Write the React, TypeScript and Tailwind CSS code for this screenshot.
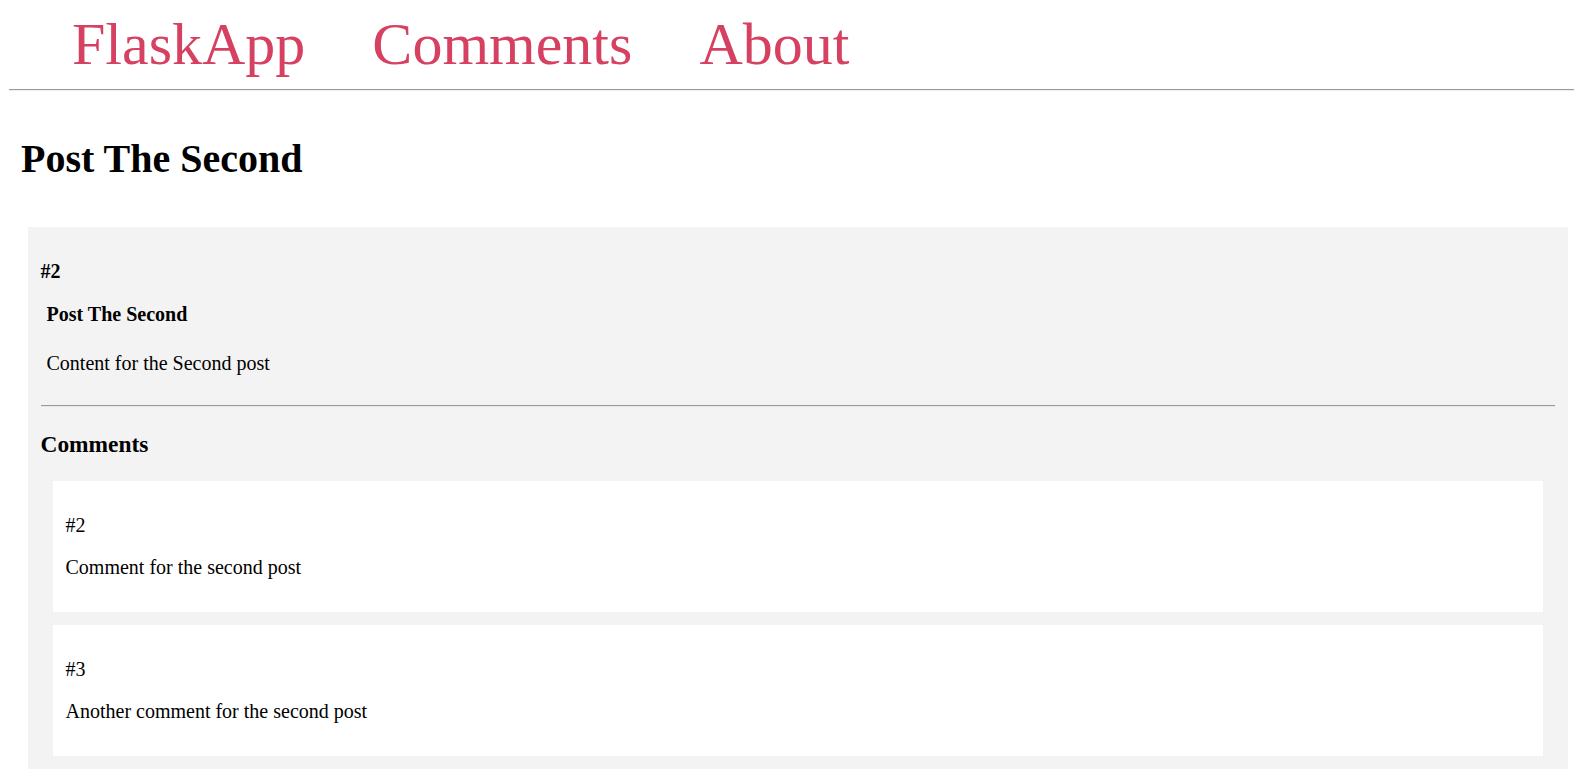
import React from "react";

const serif = "font-['Liberation_Serif','Times_New_Roman',serif]";

function Comment({ id, text }: { id: string; text: string }) {
  return (
    <div className="bg-white px-[12.5px] py-[33px] flex flex-col gap-[19px] text-[20px] leading-[23px]">
      <p>{id}</p>
      <p>{text}</p>
    </div>
  );
}

export default function App() {
  return (
    <div className={`${serif} text-black bg-white w-full h-[769px] overflow-hidden`}>
      <nav className="flex gap-[67px] pl-[72px] pt-[10px] text-[60px] leading-[69px]">
        <a href="#" className="text-[#d64161] no-underline">FlaskApp</a>
        <a href="#" className="text-[#d64161] no-underline">Comments</a>
        <a href="#" className="text-[#d64161] no-underline">About</a>
      </nav>
      <div className="mt-[10px] ml-[9px] mr-[10px] border-t border-t-[#9a9a9a] border-b border-b-[#eeeeee]" />
      <h1 className="mt-[45px] ml-[21px] text-[40px] leading-[46px] font-bold">Post The Second</h1>
      <div className="mt-[45px] ml-[28px] mr-[16px] bg-[#f3f3f3] px-[12.5px] pt-[33px] pb-[13px]">
        <p className="text-[20px] leading-[23px] font-bold">#2</p>
        <div className="pl-[6px]">
          <p className="mt-[20px] text-[20px] leading-[23px] font-bold">Post The Second</p>
          <p className="mt-[26px] text-[20px] leading-[23px]">Content for the Second post</p>
        </div>
        <div className="mt-[30px] mr-[1px] border-t border-t-[#9a9a9a] border-b border-b-[#e6e6e6]" />
        <h3 className="mt-[24px] text-[23.4px] leading-[27px] font-bold">Comments</h3>
        <div className="mt-[23px] mx-[12.5px] flex flex-col gap-[13px]">
          <Comment id="#2" text="Comment for the second post" />
          <Comment id="#3" text="Another comment for the second post" />
        </div>
      </div>
    </div>
  );
}
